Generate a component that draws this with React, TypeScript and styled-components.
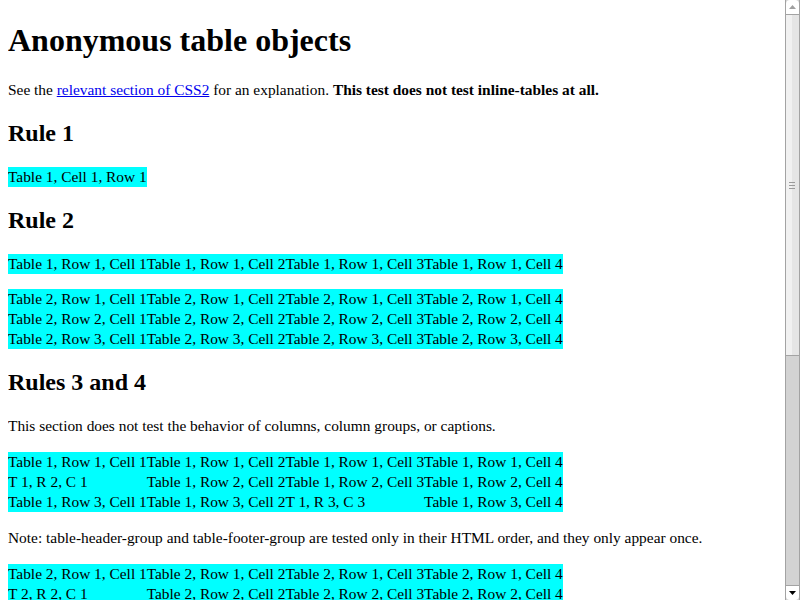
import React from "react";
import styled, { createGlobalStyle } from "styled-components";

const Global = createGlobalStyle`
  html { background: #fff; scrollbar-width: none; }
  html::-webkit-scrollbar { display: none; }
  body {
    margin: 8px;
    font-family: "Liberation Serif", "Times New Roman", serif;
    font-size: 15.4px;
    line-height: 20px;
    color: #000;
  }
`;

const Title = styled.h1`
  font-size: 32px;
  line-height: normal;
  font-weight: bold;
  margin: 14px 0 21px;
`;

const SubTitle = styled.h2`
  font-size: 24px;
  line-height: normal;
  font-weight: bold;
  margin: 20px 0;
`;

const Para = styled.p`
  margin: 16px 0;
`;

const Link = styled.a`
  color: #0000ee;
  text-decoration: underline;
`;

const Table = styled.div`
  display: table;
  background: #00ffff;
  margin: 15px 0;
`;

const Row = styled.div`
  display: table-row;
`;

const Cell = styled.div`
  display: table-cell;
  height: 20px;
  line-height: 20px;
  white-space: nowrap;
`;

/* Fake browser scrollbar drawn over the right edge of the viewport */
const ScrollBar = styled.div`
  position: fixed;
  top: 0;
  right: 0;
  width: 15px;
  height: 600px;
  display: flex;
  flex-direction: column;
  background: #d3d3d3;
  box-sizing: border-box;
  border-left: 1px solid #a3a3a3;
  border-right: 1px solid #a3a3a3;
`;

const SbButton = styled.div<{ $top?: boolean }>`
  height: 15px;
  flex: none;
  background: #fff;
  box-sizing: border-box;
  border-${(p) => (p.$top ? "bottom" : "top")}: 1px solid #a3a3a3;
  border-radius: ${(p) => (p.$top ? "4px 4px 0 0" : "0 0 4px 4px")};
  display: flex;
  align-items: center;
  justify-content: center;
`;

const Thumb = styled.div`
  height: 340px;
  flex: none;
  background: linear-gradient(to right, #f1f1f1 0, #f1f1f1 6px, #e5e5e5 6px, #e5e5e5 100%);
  border-bottom: 1px solid #a3a3a3;
  display: flex;
  align-items: center;
  justify-content: center;
`;

const Track = styled.div`
  flex: 1;
  background: #d3d3d3;
`;

const Grip = () => (
  <svg width="7" height="7" viewBox="0 0 7 7">
    <path d="M0 0.5H6M0 3.5H6M0 6.5H6" stroke="#9a9a9a" strokeWidth="1" />
  </svg>
);

const Arrow: React.FC<{ up?: boolean }> = ({ up }) => (
  <svg width="7" height="4" viewBox="0 0 7 4">
    <path d={up ? "M3.5 0L7 4H0Z" : "M0 0H7L3.5 4Z"} fill={up ? "#a0a0a0" : "#000"} />
  </svg>
);

type R = string[];

const Grid: React.FC<{ rows: R[] }> = ({ rows }) => (
  <Table>
    {rows.map((r, i) => (
      <Row key={i}>
        {r.map((c, j) => (
          <Cell key={j}>{c}</Cell>
        ))}
      </Row>
    ))}
  </Table>
);

const full = (t: number, r: number) =>
  [1, 2, 3, 4].map((c) => `Table ${t}, Row ${r}, Cell ${c}`);

export default function App() {
  return (
    <>
      <Global />
      <Title>Anonymous table objects</Title>
      <Para>
        See the <Link href="#">relevant section of CSS2</Link> for an explanation.{" "}
        <strong>This test does not test inline-tables at all.</strong>
      </Para>

      <SubTitle>Rule 1</SubTitle>
      <Grid rows={[["Table 1, Cell 1, Row 1"]]} />

      <SubTitle>Rule 2</SubTitle>
      <Grid rows={[full(1, 1)]} />
      <Grid rows={[full(2, 1), full(2, 2), full(2, 3)]} />

      <SubTitle>Rules 3 and 4</SubTitle>
      <Para>This section does not test the behavior of columns, column groups, or captions.</Para>
      <Grid
        rows={[
          full(1, 1),
          ["T 1, R 2, C 1", "Table 1, Row 2, Cell 2", "Table 1, Row 2, Cell 3", "Table 1, Row 2, Cell 4"],
          ["Table 1, Row 3, Cell 1", "Table 1, Row 3, Cell 2", "T 1, R 3, C 3", "Table 1, Row 3, Cell 4"],
        ]}
      />
      <Para>
        Note: table-header-group and table-footer-group are tested only in their HTML order, and they only appear once.
      </Para>
      <Grid
        rows={[
          full(2, 1),
          ["T 2, R 2, C 1", "Table 2, Row 2, Cell 2", "Table 2, Row 2, Cell 3", "Table 2, Row 2, Cell 4"],
          ["Table 2, Row 3, Cell 1", "Table 2, Row 3, Cell 2", "T 2, R 3, C 3", "Table 2, Row 3, Cell 4"],
        ]}
      />
      <Grid
        rows={[
          full(3, 1),
          ["T 3, R 2, C 1", "Table 3, Row 2, Cell 2", "Table 3, Row 2, Cell 3", "Table 3, Row 2, Cell 4"],
          ["Table 3, Row 3, Cell 1", "Table 3, Row 3, Cell 2", "T 3, R 3, C 3", "Table 3, Row 3, Cell 4"],
        ]}
      />

      <SubTitle>Rules 5 and 6</SubTitle>
      <Para>This section tests the generation of missing table wrappers around cells and rows.</Para>
      <Grid rows={[full(4, 1), full(4, 2)]} />
      <Grid rows={[full(5, 1)]} />

      <ScrollBar aria-hidden="true">
        <SbButton $top>
          <Arrow up />
        </SbButton>
        <Thumb>
          <Grip />
        </Thumb>
        <Track />
        <SbButton>
          <Arrow />
        </SbButton>
      </ScrollBar>
    </>
  );
}
